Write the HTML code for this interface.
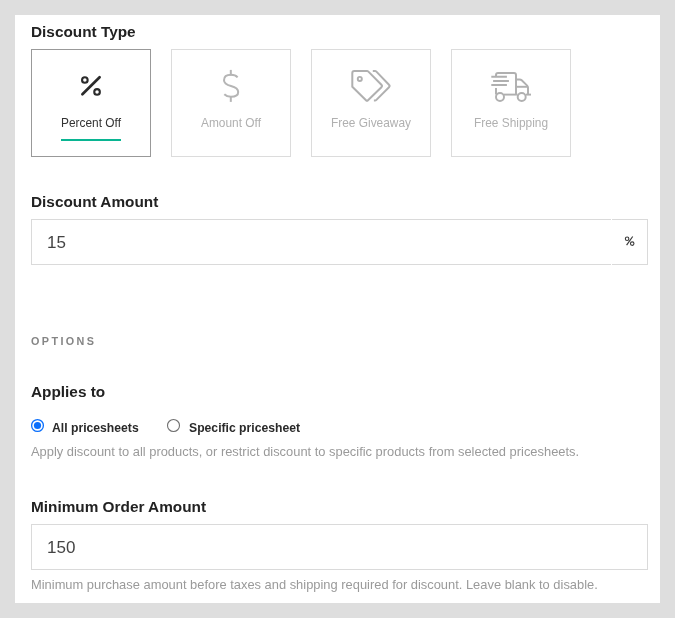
<!DOCTYPE html>
<html>
<head>
<meta charset="utf-8">
<style>
html,body{margin:0;padding:0;}
body{width:675px;height:618px;background:#dedede;position:relative;overflow:hidden;font-family:"Liberation Sans",sans-serif;}
.panel{position:absolute;left:15px;top:15px;width:645px;height:588px;background:#fff;}
.abs{position:absolute;white-space:nowrap;will-change:transform;}
.lbl{will-change:transform;}
.h{font-weight:bold;font-size:15.35px;line-height:15px;color:#222;}
.box{position:absolute;top:49px;width:118px;height:106px;border:1px solid #dcdcdc;background:#fff;}
.box.sel{border-color:#999;}
.box .lbl{position:absolute;left:0;right:0;top:67px;text-align:center;font-size:11.9px;line-height:12px;color:#b0b0b0;}
.box.sel .lbl{color:#333;}
.box svg{position:absolute;}
.inp{position:absolute;left:31px;width:615px;height:44px;border:1px solid #dadada;background:#fff;}
.val{font-size:17px;line-height:18px;color:#444;}
.help{font-size:12.9px;line-height:13px;color:#9a9a9a;}
.radio{position:absolute;width:13px;height:13px;box-sizing:border-box;border-radius:50%;}
</style>
</head>
<body>
<div class="panel"></div>

<div class="abs h" style="left:31px;top:24px;">Discount Type</div>

<div class="box sel" style="left:31px;">
  <svg style="left:44px;top:22px" width="30" height="28" viewBox="0 0 30 28">
    <line x1="6.4" y1="22.2" x2="23.6" y2="5.3" stroke="#2b2b2b" stroke-width="2.7" stroke-linecap="round"/>
    <circle cx="8.85" cy="8.0" r="2.8" fill="none" stroke="#2b2b2b" stroke-width="2.1"/>
    <circle cx="21.05" cy="19.95" r="2.8" fill="none" stroke="#2b2b2b" stroke-width="2.1"/>
  </svg>
  <div class="lbl">Percent Off</div>
  <div style="position:absolute;left:29px;top:89px;width:60px;height:2px;background:#09b592;"></div>
</div>

<div class="box" style="left:171px;">
  <svg style="left:39px;top:12px" width="40" height="45" viewBox="211 62 40 45">
    <g fill="none" stroke="#b5b5b5" stroke-width="2" stroke-linecap="butt">
      <path d="M230.8 69.9 V75.5"/>
      <path d="M230.8 96 V101.9"/>
      <path d="M237.6 77.3 C236 75.5 234 74.8 231 74.8 C226.8 74.8 224 76.8 224 80.2 C224 83.8 227 85 231 86 C235.5 87.1 238.2 88.8 238.2 92 C238.2 95.2 235.2 96.8 231 96.8 C228 96.8 225.8 95.8 224.3 94.3"/>
    </g>
  </svg>
  <div class="lbl">Amount Off</div>
</div>

<div class="box" style="left:311px;">
  <svg style="left:33px;top:12px" width="50" height="45" viewBox="0 0 50 45">
    <g fill="none" stroke="#b0b0b0" stroke-width="2" stroke-linejoin="round">
      <path d="M9.3 9 L22 9 Q22.8 9 23.4 9.6 L36.4 22.8 Q37.6 24 36.4 25.2 L23 38.2 Q22 39.2 21 38.2 L7.3 24.8 L7.3 11 Q7.3 9 9.3 9 Z"/>
      <circle cx="14.8" cy="16.9" r="2.05" stroke-width="1.9"/>
      <path d="M27.8 9 L30 9 Q30.8 9 31.4 9.6 L44 22.8 Q45.2 24 44 25.2 L31.4 37.9 Q30.8 38.5 30 38.5 L28.9 38.5"/>
    </g>
  </svg>
  <div class="lbl">Free Giveaway</div>
</div>

<div class="box" style="left:451px;">
  <svg style="left:33px;top:12px" width="50" height="45" viewBox="0 0 50 45">
    <g fill="none" stroke="#b0b0b0" stroke-width="1.95">
      <path d="M11 14.8 V13 Q11 11 13 11 L29 11 Q31 11 31 13 V32.6"/>
      <path d="M6.3 14.8 H21.9 M8.1 18.9 H23.9 M6.3 23 H21.9"/>
      <path d="M11 26 V32.6"/>
      <path d="M18.9 32.6 H32.6"/>
      <path d="M41 32.6 H46"/>
      <path d="M31 17.4 H34.6 Q35.8 17.4 36.7 18.3 L42.2 23.6 Q43 24.4 43 25.5 V32.6"/>
      <path d="M31 24.8 H43"/>
      <circle cx="15" cy="34.9" r="4.0"/>
      <circle cx="36.7" cy="34.9" r="4.0"/>
    </g>
  </svg>
  <div class="lbl">Free Shipping</div>
</div>

<div class="abs h" style="left:31px;top:194px;">Discount Amount</div>
<div class="inp" style="top:219px;"></div>
<div class="abs val" style="left:47px;top:234px;">15</div>
<svg class="abs" style="left:620px;top:232px" width="20" height="18" viewBox="620 232 20 18">
  <g fill="none" stroke="#3a3a3a">
    <circle cx="627.1" cy="238.8" r="1.75" stroke-width="1.1"/>
    <circle cx="632.2" cy="243.6" r="1.75" stroke-width="1.1"/>
    <line x1="626.6" y1="245.2" x2="632.7" y2="236.5" stroke-width="1.2"/>
  </g>
</svg>
<div class="abs" style="left:611px;top:219px;width:1px;height:1px;background:#fff;"></div>
<div class="abs" style="left:611px;top:264px;width:1px;height:1px;background:#fff;"></div>

<div class="abs" style="left:31px;top:336px;font-size:10.8px;line-height:11px;font-weight:bold;letter-spacing:2.4px;color:#858585;">OPTIONS</div>

<div class="abs h" style="left:31px;top:384px;">Applies to</div>

<svg class="abs" style="left:30px;top:418px" width="16" height="16" viewBox="30 418 16 16">
  <circle cx="37.5" cy="425.5" r="5.9" fill="none" stroke="#0a6ffc" stroke-width="1.3"/>
  <circle cx="37.5" cy="425.5" r="3.6" fill="#0a6ffc"/>
</svg>
<div class="abs" style="left:52px;top:422px;font-size:12.2px;line-height:12px;font-weight:bold;color:#2a2a2a;">All pricesheets</div>

<svg class="abs" style="left:166px;top:418px" width="16" height="16" viewBox="166 418 16 16">
  <circle cx="173.5" cy="425.5" r="6" fill="none" stroke="#707070" stroke-width="1.1"/>
</svg>
<div class="abs" style="left:189px;top:422px;font-size:12.2px;line-height:12px;font-weight:bold;color:#2a2a2a;">Specific pricesheet</div>

<div class="abs help" style="left:31px;top:445px;">Apply discount to all products, or restrict discount to specific products from selected pricesheets.</div>

<div class="abs h" style="left:31px;top:499px;">Minimum Order Amount</div>
<div class="inp" style="top:524px;"></div>
<div class="abs val" style="left:47px;top:539px;">150</div>

<div class="abs help" style="left:31px;top:578px;">Minimum purchase amount before taxes and shipping required for discount. Leave blank to disable.</div>

</body>
</html>
